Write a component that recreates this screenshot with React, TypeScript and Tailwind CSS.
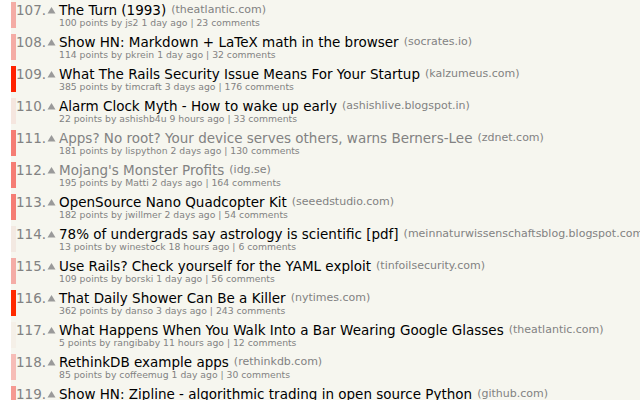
import React from "react";

type Item = {
  rank: number;
  title: string;
  site: string;
  points: number;
  user: string;
  age: string;
  comments: number;
  bar: string;
  visited?: boolean;
};

const items: Item[] = [
  { rank: 107, title: "The Turn (1993)", site: "theatlantic.com", points: 100, user: "js2", age: "1 day ago", comments: 23, bar: "bg-[#f4aca5]" },
  { rank: 108, title: "Show HN: Markdown + LaTeX math in the browser", site: "socrates.io", points: 114, user: "pkrein", age: "1 day ago", comments: 32, bar: "bg-[#f4aca5]" },
  { rank: 109, title: "What The Rails Security Issue Means For Your Startup", site: "kalzumeus.com", points: 385, user: "timcraft", age: "3 days ago", comments: 176, bar: "bg-[#ff2200]" },
  { rank: 110, title: "Alarm Clock Myth - How to wake up early", site: "ashishlive.blogspot.in", points: 22, user: "ashishb4u", age: "9 hours ago", comments: 33, bar: "bg-[#f5e6df]" },
  { rank: 111, title: "Apps? No root? Your device serves others, warns Berners-Lee", site: "zdnet.com", points: 181, user: "lispython", age: "2 days ago", comments: 130, bar: "bg-[#f57d74]", visited: true },
  { rank: 112, title: "Mojang's Monster Profits", site: "idg.se", points: 195, user: "Matti", age: "2 days ago", comments: 164, bar: "bg-[#f57d74]", visited: true },
  { rank: 113, title: "OpenSource Nano Quadcopter Kit", site: "seeedstudio.com", points: 182, user: "jwillmer", age: "2 days ago", comments: 54, bar: "bg-[#f57d74]" },
  { rank: 114, title: "78% of undergrads say astrology is scientific [pdf]", site: "meinnaturwissenschaftsblog.blogspot.com", points: 13, user: "winestock", age: "18 hours ago", comments: 6, bar: "bg-[#f3e9e2]" },
  { rank: 115, title: "Use Rails? Check yourself for the YAML exploit", site: "tinfoilsecurity.com", points: 109, user: "borski", age: "1 day ago", comments: 56, bar: "bg-[#f4aca6]" },
  { rank: 116, title: "That Daily Shower Can Be a Killer", site: "nytimes.com", points: 362, user: "danso", age: "3 days ago", comments: 243, bar: "bg-[#ff2a00]" },
  { rank: 117, title: "What Happens When You Walk Into a Bar Wearing Google Glasses", site: "theatlantic.com", points: 5, user: "rangibaby", age: "11 hours ago", comments: 12, bar: "bg-[#f5f0e8]" },
  { rank: 118, title: "RethinkDB example apps", site: "rethinkdb.com", points: 85, user: "coffeemug", age: "1 day ago", comments: 30, bar: "bg-[#f6bdb7]" },
  { rank: 119, title: "Show HN: Zipline - algorithmic trading in open source Python", site: "github.com", points: 0, user: "", age: "", comments: 0, bar: "bg-[#f59a92]" },
];

const Arrow = () => (
  <svg width="9" height="8" viewBox="0 0 9 8" className="shrink-0">
    <polygon points="4.5,1 8.5,7.5 0.5,7.5" fill="#9a9a9a" />
  </svg>
);

const App: React.FC = () => {
  return (
    <div
      className="flex w-[640px] h-[400px] overflow-hidden bg-white"
      style={{ fontFamily: "Verdana, 'DejaVu Sans', sans-serif" }}
    >
      <div className="w-[11px] shrink-0 bg-white" />
      <div className="flex-1 bg-[#f6f6ef] flex flex-col overflow-hidden">
        {items.map((it) => (
          <div key={it.rank} className="flex h-[32px] shrink-0">
            <div className={`w-[5px] h-[26px] mt-[2px] shrink-0 ${it.bar}`} />
            <div className="flex flex-col">
              <div className="flex items-center h-[19px] pt-[1px] whitespace-nowrap">
                <span className="w-[30px] text-right text-[13.5px] text-[#828282]">{it.rank}.</span>
                <span className="ml-[1px] mr-[3px] flex items-center">
                  <Arrow />
                </span>
                <span className={`text-[13.5px] ${it.visited ? "text-[#828282]" : "text-black"}`}>
                  {it.title}
                </span>
                <span className="ml-[5px] text-[11px] text-[#828282]">({it.site})</span>
              </div>
              {it.user && (
                <div className="pl-[43px] text-[9.25px] leading-[10px] mt-[-1px] text-[#828282] whitespace-nowrap">
                  {it.points} points by {it.user} {it.age} | {it.comments} comments
                </div>
              )}
            </div>
          </div>
        ))}
      </div>
    </div>
  );
};

export default App;
